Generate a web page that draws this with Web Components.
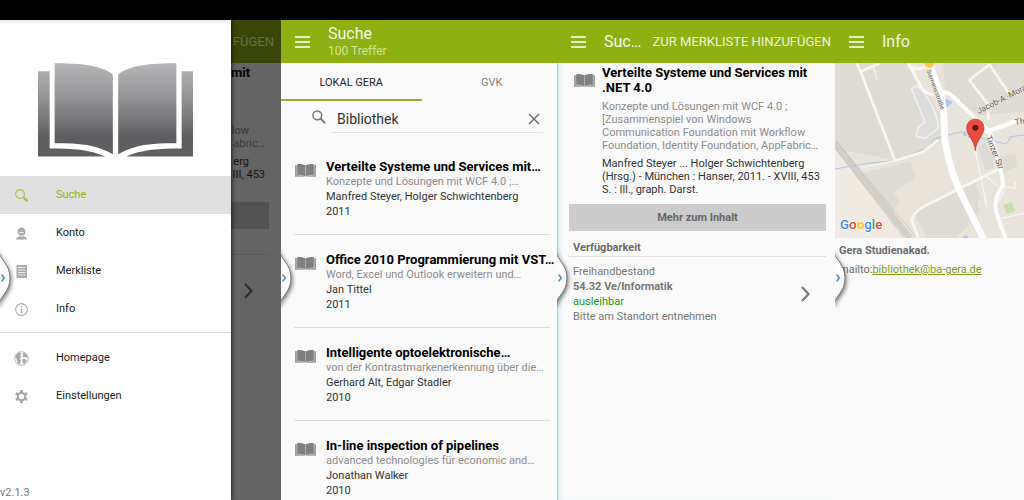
<!DOCTYPE html>
<html lang="de">
<head>
<meta charset="utf-8">
<title>Bibliothek</title>
<meta name="viewport" content="width=device-width, initial-scale=1">
<style>
  body { margin: 0; background: #fafafa; font-family: Roboto, "Liberation Sans", sans-serif; }
</style>
</head>
<body>
<library-app></library-app>
<script>
const reset = `
  *, *::before, *::after { box-sizing: border-box; }
  button, input { font: inherit; color: inherit; border: 0; padding: 0; margin: 0; background: none; border-radius: 0; outline: 0; }
  button { cursor: pointer; }
  h1, h2, p, ul { margin: 0; padding: 0; font-size: inherit; }
  ul { list-style: none; }
  a { color: inherit; text-decoration: none; }
  svg { display: block; }
`;

function define(name, css, html, after) {
  const template = document.createElement('template');
  template.innerHTML = `<style>${reset}${css}</style>${html}`;
  customElements.define(name, class extends HTMLElement {
    constructor() {
      super();
      this.attachShadow({ mode: 'open' }).append(template.content.cloneNode(true));
    }
    connectedCallback() { if (after) after(this, this.shadowRoot); }
  });
}

/* Open book, small in lists and large in the drawer header */
define('book-icon', `
  :host { display: block; width: 21px; color: #808080; }
  :host([large]) { width: 155px; }
  svg { width: 100%; height: auto; }
`, `
  <svg viewBox="115 145 466 281" aria-hidden="true">
    <defs><linearGradient id="g" gradientUnits="userSpaceOnUse" x1="0" y1="145" x2="0" y2="426">
      <stop offset="0" stop-color="#b6b6b8"/><stop offset=".45" stop-color="#8b898c"/><stop offset=".8" stop-color="#5c5d5f"/><stop offset="1" stop-color="#5f6062"/>
    </linearGradient></defs>
    <g class="ink">
      <path class="shade" d="M115 170H581V426H115Z" opacity="0"/>
      <path class="cover" d="M115 170H150V402C220 402 270 405 317 426H115Z"/>
      <path class="cover" d="M581 170H547V402C480 402 425 405 380 426H581Z"/>
      <path d="M165 146C240 146 305 151 340 180V419C290 390 240 386 165 386Z"/>
      <path d="M531 146C456 146 391 151 356 180V419C406 390 456 386 531 386Z"/>
    </g>
  </svg>
`, (host, root) => {
  const large = host.hasAttribute('large');
  root.querySelector('.ink').setAttribute('fill', large ? 'url(#g)' : 'currentColor');
  if (!large) {
    root.querySelectorAll('.cover').forEach(c => c.setAttribute('opacity', '.5'));
    root.querySelector('.shade').setAttribute('opacity', '.5');
  }
});

/* Pull handle on the left edge of every screen */
define('edge-handle', `
  :host { display: block; position: absolute; left: 0; top: 228px; width: 18px; height: 60px; z-index: 5; overflow: hidden; }
  button { display: block; }
  path.tab { filter: drop-shadow(1px 2px 2px rgba(0,0,0,.55)); }
`, `
  <button aria-label="Seitenleiste öffnen">
    <svg width="18" height="60" viewBox="0 0 18 60">
      <path class="tab" d="M-2 2C0 12 10 16 10 30S0 48 -2 58Z" fill="#fcfcfc" stroke="#777" stroke-width="1"/>
      <path d="M1.500 26.500L4.300 30L1.500 33.500" fill="none" stroke="#5b9fc0" stroke-width="1.800"/>
    </svg>
  </button>
`);

define('app-bar', `
  :host { display: flex; align-items: center; height: 43px; padding: 0 4px 0 14px; background: #8eb012; color: #f4f8e6; white-space: nowrap; position: relative; z-index: 2; }
  .menu { flex: none; width: 16px; margin-right: 17px; }
  h1 { font-size: 16px; line-height: 19px; font-weight: 400; }
  .sub { font-size: 12px; line-height: 17px; color: #d3e09a; }
`, `
  <button class="menu" aria-label="Menü">
    <svg width="16" height="12" viewBox="0 0 16 12"><path d="M0 1H15M0 6H15M0 11H15" stroke="#e6efc4" stroke-width="2"/></svg>
  </button>
  <div><h1><slot></slot></h1><div class="sub"><slot name="sub"></slot></div></div>
  <slot name="action"></slot>
`);

const icons = {
  search: '<circle cx="5" cy="5" r="4.400" fill="none" stroke="currentColor" stroke-width="1.200"/><path d="M8.200 8.200L12.500 12.200" stroke="currentColor" stroke-width="2.400"/>',
  user: '<path d="M2.700 5C2 -1 11 -1 10.300 5C10.500 10 2.500 10 2.700 5Z" fill="currentColor"/><path d="M4 5.500H9" stroke="#fff" stroke-width=".8"/><path d="M1 12.500C1.500 9.800 4 9.800 5 9L6.500 10L8 9C9 9.800 11.500 9.800 12 12.500Z" fill="currentColor"/>',
  list: '<path d="M1.500 0H12V13H1.500Z" fill="currentColor"/><path d="M3 2.500H10.500M3 5H10.500M3 7.500H10.500M3 10H10.500" stroke="#f2f2f2" stroke-width=".9"/>',
  info: '<circle cx="6.500" cy="6.500" r="5.900" fill="none" stroke="currentColor" stroke-width="1.100"/><path d="M6.500 5.500V10M6.500 3V4.300" stroke="currentColor" stroke-width="1.400"/>',
  globe: '<circle cx="6.500" cy="6.500" r="6.800" fill="none" stroke="currentColor" stroke-width=".9"/><path d="M1 3L4 .6L6.500 1.500L5.200 3.500L6.600 4.500L4.500 6.500L6 8L5 12.300L2.500 11L1.500 6.500L.3 5.500ZM8.500 .5L11.500 2.200L13 6L10.500 5L8.500 5.600L7.500 3.500ZM7.200 7L10.800 7.300L11.800 9L9 12.300L7.500 10Z" fill="currentColor"/>',
  gear: '<circle cx="6.500" cy="6.500" r="3.700" fill="none" stroke="currentColor" stroke-width="2.200"/><path d="M6.500 0V3M6.500 10V13M.900 3.300L3.500 4.800M9.500 8.200L12.100 9.700M.900 9.700L3.500 8.200M9.500 4.800L12.100 3.300" stroke="currentColor" stroke-width="2.800"/>'
};

define('drawer-item', `
  :host { display: block; }
  a { display: flex; align-items: center; height: 38px; padding-left: 15px; font-size: 11px; line-height: 16px; color: #222; }
  svg { width: 13px; height: 13px; margin-right: 28px; color: #aaa; overflow: visible; flex: none; }
  :host([active]) a { background: #e0e0e0; color: #8fb514; }
  :host([active]) svg { color: #a5c740; }
`, `<a href="#"><svg viewBox="0 0 13 13" aria-hidden="true"></svg><slot></slot></a>`,
(host, root) => { root.querySelector('svg').innerHTML = icons[host.getAttribute('icon')]; });

define('nav-drawer', `
  :host { display: flex; flex-direction: column; position: relative; background: #fff; z-index: 4; box-shadow: 1px 0 4px rgba(0,0,0,.7), inset 0 5px 5px -5px rgba(0,0,0,.2); }
  header { height: 156px; display: flex; align-items: center; justify-content: center; padding-top: 24px; flex: none; }
  hr { border: 0; border-top: 1px solid #ddd; margin: 4px 0 6px; width: 100%; }
  .version { margin-top: auto; font-size: 11px; line-height: 14px; color: #777; }
`, `
  <header><book-icon large></book-icon></header>
  <nav>
    <drawer-item icon="search" active>Suche</drawer-item>
    <drawer-item icon="user">Konto</drawer-item>
    <drawer-item icon="list">Merkliste</drawer-item>
    <drawer-item icon="info">Info</drawer-item>
    <hr>
    <drawer-item icon="globe">Homepage</drawer-item>
    <drawer-item icon="gear">Einstellungen</drawer-item>
  </nav>
  <div class="version">v2.1.3</div>
`);

define('hit-item', `
  :host { display: flex; gap: 10px; align-items: flex-start; padding: 17px 0 15px 1px; border-bottom: 1px solid #ddd; font-size: 11px; line-height: 15px; color: #333; white-space: nowrap; }
  book-icon { margin-top: 5px; flex: none; }
  h2 { font-size: 13px; color: #000; }
  .sub { color: #8c8c8c; }
`, `
  <book-icon></book-icon>
  <div><h2><slot name="title"></slot></h2><div class="sub"><slot name="sub"></slot></div><div><slot name="author"></slot></div><div><slot></slot></div></div>
`);

define('search-screen', `
  :host { display: block; position: relative; overflow: hidden; }
  .tabs { display: flex; height: 38px; margin-right: -5px; font-size: 11px; color: #808080; }
  .tabs button { flex: 1; padding-top: 2px; border-bottom: 2px solid transparent; }
  .tabs button[aria-selected=true] { color: #222; border-color: #93ad3c; }
  form { display: flex; align-items: center; height: 32px; margin: 0 14px 0 31px; color: #333; }
  form svg { flex: none; }
  .field { display: flex; align-items: center; flex: 1; min-width: 0; height: 28px; margin: 4px 0 0 5px; padding: 0 3px 0 6px; border-bottom: 1px solid #e2e2e2; }
  input { flex: 1; width: 100%; min-width: 0; font-size: 14px; line-height: 20px; }
  ul { padding: 9px 7px 0 13px; }
`, `
  <app-bar>Suche<span slot="sub">100 Treffer</span></app-bar>
  <div class="tabs" role="tablist">
    <button role="tab" aria-selected="true">LOKAL GERA</button>
    <button role="tab" aria-selected="false">GVK</button>
  </div>
  <form>
    <svg width="14" height="14" viewBox="0 0 14 14" aria-hidden="true"><circle cx="5.300" cy="5.300" r="4.400" fill="none" stroke="#777" stroke-width="1.500"/><path d="M8.500 8.500L13.200 13.200" stroke="#777" stroke-width="1.900"/></svg>
    <div class="field">
      <input type="text" value="Bibliothek" aria-label="Suchbegriff">
      <button type="button" aria-label="Löschen"><svg width="12" height="12" viewBox="0 0 12 12"><path d="M1 1L11 11M11 1L1 11" stroke="#666" stroke-width="1.400"/></svg></button>
    </div>
  </form>
  <ul>
    <li><hit-item><span slot="title">Verteilte Systeme und Services mit…</span><span slot="sub">Konzepte und Lösungen mit WCF 4.0 ;…</span><span slot="author">Manfred Steyer, Holger Schwichtenberg</span>2011</hit-item></li>
    <li><hit-item><span slot="title">Office 2010 Programmierung mit VST…</span><span slot="sub">Word, Excel und Outlook erweitern und…</span><span slot="author">Jan Tittel</span>2011</hit-item></li>
    <li><hit-item><span slot="title">Intelligente optoelektronische…</span><span slot="sub">von der Kontrastmarkenerkennung über die…</span><span slot="author">Gerhard Alt, Edgar Stadler</span>2010</hit-item></li>
    <li><hit-item><span slot="title">In-line inspection of pipelines</span><span slot="sub">advanced technologies für economic and…</span><span slot="author">Jonathan Walker</span>2010</hit-item></li>
  </ul>
  <edge-handle></edge-handle>
`);

define('detail-screen', `
  :host { display: block; position: relative; overflow: hidden; font-size: 11px; line-height: 13px; color: #333; white-space: nowrap; box-shadow: inset 1px 0 0 #8fd6f2, inset 5px 0 5px -3px #c5e8f5; }
  .action { margin-left: auto; font-size: 13px; color: #eef5d6; }
  article { display: flex; gap: 7px; padding: 2px 0 0 17px; }
  book-icon { margin-top: 9px; flex: none; }
  h2 { font-size: 13px; line-height: 15px; color: #000; }
  .text { display: grid; gap: 5px; }
  .sub { color: #8c8c8c; }
  .more { display: block; width: calc(100% - 21px); height: 27px; margin: 8px 9px 9px 12px; background: #ccc; font-weight: 700; color: #666; }
  section { margin: 0 9px 0 12px; color: #777; line-height: 15px; }
  h3 { margin: 0; padding: 0 4px 1px; font-size: 11px; line-height: 15px; color: #6b6b6b; border-bottom: 1px solid #e2e2e2; }
  .copy { display: flex; align-items: center; justify-content: space-between; padding: 7px 16px 0 4px; }
  .free { color: #149614; }
`, `
  <app-bar>Suc…<button slot="action" class="action">ZUR MERKLISTE HINZUFÜGEN</button></app-bar>
  <article>
    <book-icon></book-icon>
    <div class="text">
      <h2>Verteilte Systeme und Services mit<br>.NET 4.0</h2>
      <p class="sub">Konzepte und Lösungen mit WCF 4.0 ;<br>[Zusammenspiel von Windows<br>Communication Foundation mit Workflow<br>Foundation, Identity Foundation, AppFabric…</p>
      <p>Manfred Steyer ... Holger Schwichtenberg<br>(Hrsg.) - München : Hanser, 2011. - XVIII, 453<br>S. : Ill., graph. Darst.</p>
    </div>
  </article>
  <button class="more">Mehr zum Inhalt</button>
  <section>
    <h3>Verfügbarkeit</h3>
    <div class="copy">
      <div><p>Freihandbestand</p><p><b>54.32 Ve/Informatik</b></p><p class="free">ausleihbar</p><p>Bitte am Standort entnehmen</p></div>
      <svg width="9" height="16" viewBox="0 0 9 16" aria-hidden="true"><path d="M1 1L7.500 8L1 15" fill="none" stroke="#777" stroke-width="2.200"/></svg>
    </div>
  </section>
  <edge-handle></edge-handle>
`);

/* The strip of the dimmed detail screen that the open drawer leaves in view */
define('dimmed-strip', `
  :host { display: flex; flex-direction: column; background: #646464; color: #141414; font-size: 11px; line-height: 13px; white-space: nowrap; text-align: right; overflow: hidden; }
  .bar { height: 43px; line-height: 43px; padding-right: 7px; background: #394608; color: #66704a; font-size: 13px; }
  h2 { height: 35px; padding: 2px 36px 0 0; font-size: 13px; line-height: 15px; color: #000; }
  p { padding-right: 16px; }
  .short { padding-right: 32px; }
  .sub { color: #383838; }
  .text { display: flex; flex-direction: column; align-items: flex-end; }
  .gap { height: 26px; }
  .break { height: 5px; }
  .more { height: 27px; margin: 21px 12px 25px 0; background: #525252; }
  hr { width: 100%; margin: 0 12px 0 -12px; border: 0; border-top: 1px solid #5a5a5a; }
  svg { margin: 28px 28px 0 auto; }
`, `
  <div class="bar">FÜGEN</div>
  <h2>mit</h2>
  <div class="text">
    <div class="gap"></div>
    <p class="sub short">flow</p>
    <p class="sub">abric…</p>
    <div class="break"></div>
    <p class="short">erg</p>
    <p>III, 453</p>
  </div>
  <div class="more"></div>
  <hr>
  <svg width="9" height="16" viewBox="0 0 9 16" aria-hidden="true"><path d="M1 1L7.500 8L1 15" fill="none" stroke="#303030" stroke-width="2.200"/></svg>
`);

define('drawer-screen', `
  :host { display: grid; grid-template-columns: 231fr 50fr; position: relative; overflow: hidden; }
`, `
  <nav-drawer></nav-drawer>
  <dimmed-strip></dimmed-strip>
  <edge-handle></edge-handle>
`);

define('site-map', `
  :host { display: block; height: 175px; }
  svg { width: 100%; height: 100%; font-family: Roboto, sans-serif; }
`, `
  <svg viewBox="15 144 567 525" preserveAspectRatio="xMidYMid slice" role="img" aria-label="Karte">
    <path d="M0 140H600V680H0Z" fill="#e8e4db"/>
    <g fill="#dedad4">
      <path d="M15 144H230L300 240L330 300V375L260 415L190 435L15 400Z"/>
      <path d="M340 144H582V290L450 300L430 290L345 228Z"/>
      <path d="M70 480L240 440L256 490L190 530L210 560L190 590L110 520Z"/>
      <path d="M250 590L435 498L452 550L440 560L450 590L380 669H290Z"/>
      <path d="M500 430L555 415L562 455L515 475Z"/>
    </g>
    <path d="M15 380L75 480L220 669H15Z" fill="#efebe3"/>
    <path d="M15 385L240 669" stroke="#d3cfc8" stroke-width="20" fill="none"/>
    <path d="M15 375L262 669M15 398L222 669" stroke="#c3bfb9" stroke-width="2" fill="none"/>
    <path d="M258 212C280 220 325 290 325 340L285 370L258 365L265 335L285 322L245 222Z" fill="#dddcdc" stroke="#f2f0ec" stroke-width="5"/>
    <path d="M15 462L110 445L200 437L300 395L310 372L395 350L460 372L530 387L542 365L582 360" stroke="#a9c8e6" stroke-width="3" fill="none"/>
    <g fill="none" stroke="#f8f6f1" stroke-width="8" stroke-linejoin="round">
      <path d="M80 144L90 165L195 437L280 410L325 375M90 170L150 144"/>
      <path d="M100 458L195 437M130 155L142 194" stroke-width="4"/>
      <path d="M235 144L270 210Q285 240 310 238M235 152Q260 170 300 150" stroke-width="10"/>
      <path d="M478 148L418 195L475 270V315M478 148L540 240"/>
      <path d="M265 669L245 615Q250 590 290 570L510 460" stroke-width="9"/>
      <path d="M436 405L470 575M465 480L505 515M582 595L515 610M505 560L530 515L555 520V500" stroke-width="4"/>
    </g>
    <g fill="none" stroke="#fff" stroke-linecap="round">
      <path d="M298 144L340 260L345 380Q360 470 400 550L465 680" stroke-width="20"/>
      <path d="M335 235Q350 225 375 250L430 305L480 350L515 480L520 510Q490 550 498 590L530 680" stroke-width="12"/>
      <path d="M470 350L560 318" stroke-width="12"/>
    </g>
    <path d="M283 144H315L305 160L288 156Z" fill="#f6cc50"/>
    <path d="M345 250L368 262L350 278Z" fill="#a7c6fb"/>
    <path d="M395 669L408 660L418 669Z" fill="#a7c6fb"/>
    <path d="M520 570L545 562L555 587L530 597Z" fill="#c5dfae"/>
    <path d="M445 400L465 380L492 430L488 460L465 465Z" fill="#dcdad7"/>
    <g fill="#5a5a5a" font-size="25" stroke="#f5f3ee" stroke-width="3" paint-order="stroke">
      <text transform="translate(289 166) rotate(70)" font-size="19">Siemensstraße</text>
      <text transform="translate(446 297) rotate(-27)">Jacob-A.-Moran</text>
      <text transform="translate(556 330) rotate(-8)">Thi</text>
      <text transform="translate(467 366) rotate(68)">Tinzer Str</text>
      <text transform="translate(396 360) rotate(22)" font-size="18" fill="#7f9fc8">Bra</text>
    </g>
    <path d="M436 407C434 375 410 362 410 338A26 26 0 0 1 462 338C462 362 438 375 436 407Z" fill="#ea4c3e" stroke="#b5372c" stroke-width="2"/>
    <circle cx="436" cy="338" r="9" fill="#5e1310"/>
    <text x="30" y="642" font-size="40" font-weight="500" stroke="#fff" stroke-width="4" paint-order="stroke"><tspan fill="#4285f4">G</tspan><tspan fill="#ea4335">o</tspan><tspan fill="#fbbc05">o</tspan><tspan fill="#4285f4">g</tspan><tspan fill="#34a853">l</tspan><tspan fill="#ea4335">e</tspan></text>
  </svg>
`);

define('info-screen', `
  :host { display: block; position: relative; overflow: hidden; font-size: 11px; line-height: 15px; color: #6b6b6b; }
  .contact { display: grid; gap: 4px; padding: 5px 4px; }
  a { color: #7d9c10; text-decoration: underline; }
`, `
  <app-bar>Info</app-bar>
  <site-map></site-map>
  <div class="contact"><b>Gera Studienakad.</b><p>mailto:<a href="mailto:bibliothek@ba-gera.de">bibliothek@ba-gera.de</a></p></div>
  <edge-handle></edge-handle>
`);

define('library-app', `
  :host { display: grid; grid-template-rows: 20px 1fr; height: 100vh; }
  .status { background: #000; }
  main { display: grid; grid-template-columns: 281fr 276fr 278fr 189fr; grid-template-rows: minmax(0, 1fr); min-height: 0; }
`, `
  <div class="status"></div>
  <main>
    <drawer-screen></drawer-screen>
    <search-screen></search-screen>
    <detail-screen></detail-screen>
    <info-screen></info-screen>
  </main>
`);
</script>
</body>
</html>
